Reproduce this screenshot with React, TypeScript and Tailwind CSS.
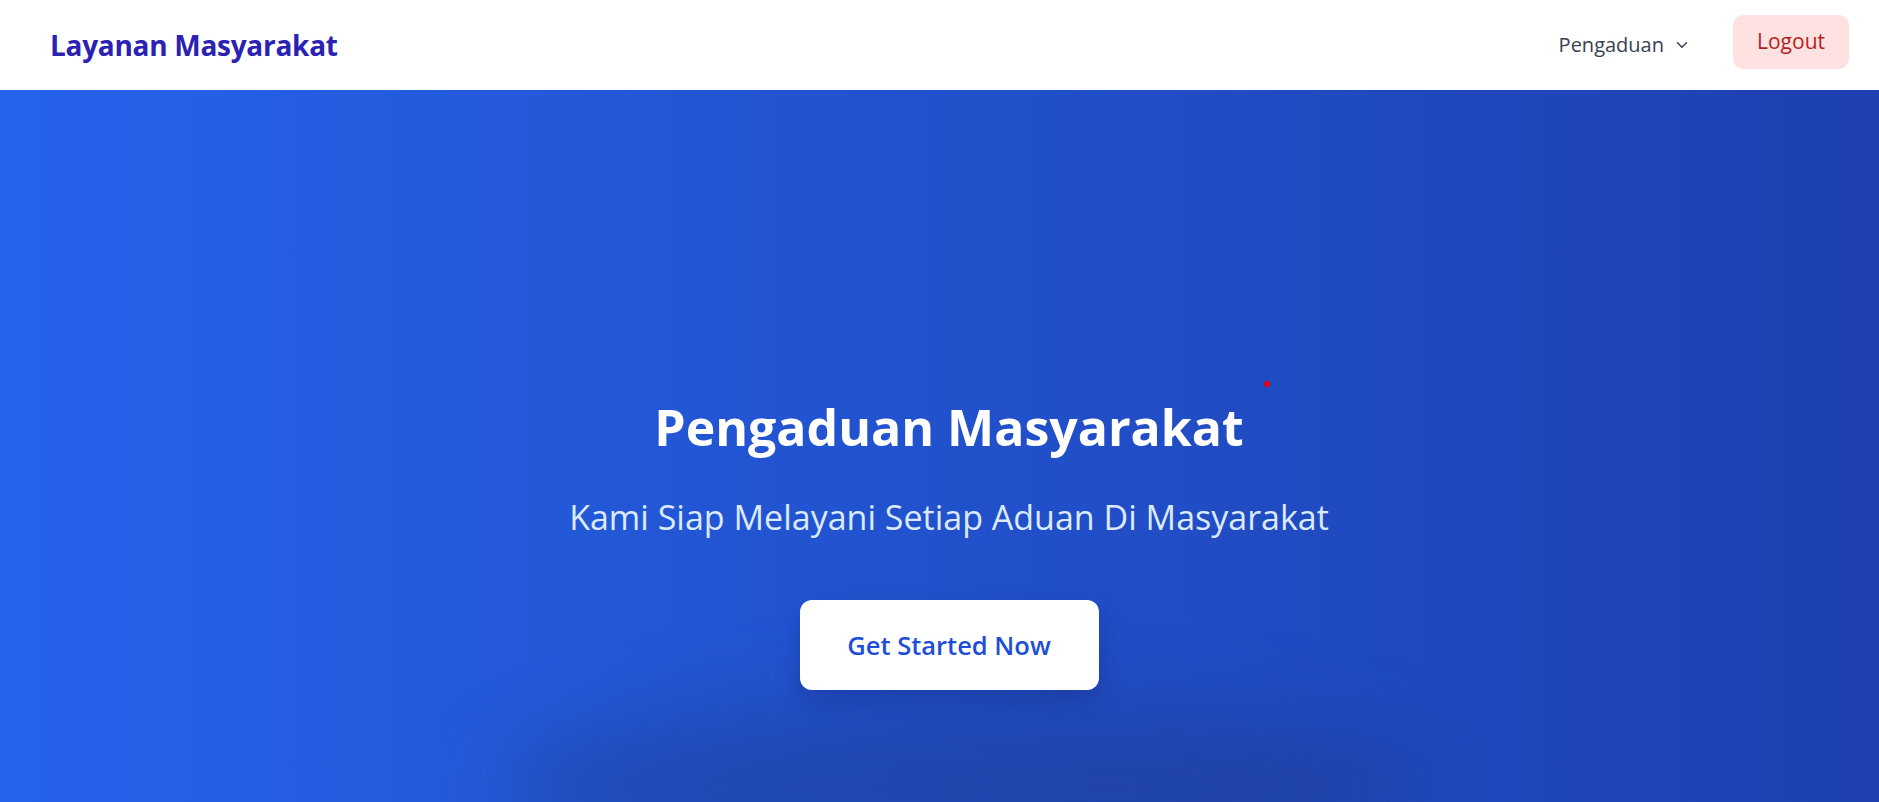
import { ChevronDown } from 'lucide-react'

export default function App() {
  return (
    <div className="min-h-screen font-['Open_Sans',sans-serif] overflow-hidden">
      <header className="h-[90px] bg-white flex items-center justify-between pl-[50px] pr-[30px] relative z-10">
        <a href="#" className="text-[28px] font-bold text-[#2b22b3] tracking-[-0.01em]">
          Layanan Masyarakat
        </a>
        <nav className="flex items-center gap-[42px]">
          <button className="flex items-center gap-[9px] text-[20px] font-medium text-[#374151]">
            Pengaduan
            <ChevronDown className="w-[18px] h-[18px]" strokeWidth={2} />
          </button>
          <button className="mb-[6px] h-[54px] w-[116px] rounded-[10px] bg-[#fee2e2] text-[#b91c1c] text-[21px] font-medium">
            Logout
          </button>
        </nav>
      </header>

      <section className="relative h-[712px] bg-gradient-to-r from-[#2563eb] to-[#1e40af] flex flex-col items-center pt-[300px] pl-[19px] text-center">
        <span className="absolute left-[1264px] top-[291px] w-[6px] h-[6px] rounded-full bg-red-600" />
        <div className="pointer-events-none absolute left-[500px] right-[450px] bottom-[-70px] h-[170px] rounded-[50%] bg-[#1e3a8a]/45 blur-[40px]" />
        <h1 className="relative text-[50px] leading-[74px] font-bold text-white">Pengaduan Masyarakat</h1>
        <p className="relative mt-[30px] text-[34px] leading-[46px] text-[#dbeafe]">
          Kami Siap Melayani Setiap Aduan Di Masyarakat
        </p>
        <button className="relative mt-[60px] w-[299px] h-[90px] rounded-[12px] bg-white text-[#1d4ed8] text-[25.5px] font-semibold shadow-[0_10px_25px_rgba(15,23,90,0.25)]">
          Get Started Now
        </button>
      </section>
    </div>
  )
}
